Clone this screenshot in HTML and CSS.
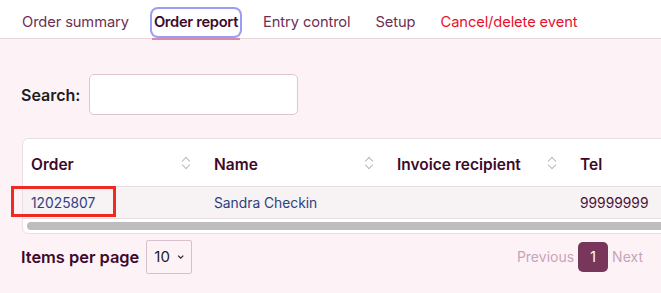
FILE: index.html
```html
<!DOCTYPE html>
<html lang="en">
<head>
  <meta charset="UTF-8" />
  <title>Order report</title>
  <link rel="stylesheet" href="styles.css">
</head>
<body>
  <nav class="tabs">
    <a class="tab">Order summary</a>
    <a class="tab active">Order report</a>
    <a class="tab">Entry control</a>
    <a class="tab">Setup</a>
    <a class="tab danger">Cancel/delete event</a>
  </nav>

  <main class="page">
    <div class="search">
      <label for="search">Search:</label>
      <input type="text" id="search">
    </div>

    <div class="card">
      <table class="orders">
        <thead>
          <tr>
            <th>Order <span class="sort"></span></th>
            <th>Name <span class="sort"></span></th>
            <th>Invoice recipient <span class="sort"></span></th>
            <th>Tel <span class="sort"></span></th>
          </tr>
        </thead>
        <tbody>
          <tr>
            <td class="order-cell"><a class="link">12025807</a><span class="highlight"></span></td>
            <td><a class="link">Sandra Checkin</a></td>
            <td></td>
            <td>99999999</td>
          </tr>
        </tbody>
      </table>
      <div class="scrollbar"><div class="thumb"></div></div>
    </div>

    <div class="footer">
      <div class="per-page">
        <span>Items per page</span>
        <div class="select">10 <svg width="10" height="6" viewBox="0 0 10 6"><path d="M1.5 1.2 5 4.6 8.5 1.2" fill="none" stroke="#222" stroke-width="1.6"/></svg></div>
      </div>
      <div class="pager">
        <span class="muted">Previous</span>
        <span class="current">1</span>
        <span class="muted">Next</span>
      </div>
    </div>
  </main>
</body>
</html>
```

FILE: styles.css
```css
* { box-sizing: border-box; }

body {
  margin: 0;
  font-family: Inter, 'Noto Sans', sans-serif;
  background: #fdf3f7;
  color: #3d0a2a;
  width: 661px;
  height: 293px;
  overflow: hidden;
}

.tabs {
  display: flex;
  align-items: center;
  gap: 21px;
  height: 39px;
  padding: 6px 0 0 20px;
  background: #ffffff;
  border-bottom: 1px solid #e6d6dd;
}

.tab {
  position: relative;
  font-size: 14.7px;
  line-height: 19px;
  color: #6e2f52;
  padding: 4px 2px;
  letter-spacing: -0.1px;
}

.tab.active {
  font-weight: 600;
  color: #3d0a2a;
  letter-spacing: -0.3px;
  border-radius: 6px;
  box-shadow: 0 0 0 2px #9c9cf7;
}

.tab.active::after {
  content: '';
  position: absolute;
  left: 0;
  right: 0;
  bottom: -4px;
  height: 2px;
  background: #d88aa8;
}

.tab.danger { color: #e8112d; }

.page {
  padding: 35px 0 0 21px;
}

.search {
  display: flex;
  align-items: center;
  gap: 9px;
}

.search label {
  font-size: 16px;
  font-weight: 600;
  color: #1d1d1d;
}

.search input {
  width: 209px;
  height: 41px;
  border: 1px solid #dcc7d1;
  border-radius: 5px;
  background: #fff;
}

.card {
  margin-top: 23px;
  margin-left: 1px;
  width: 734px;
  background: #fff;
  border: 1px solid #eadfe4;
  border-radius: 6px;
}

.orders {
  border-collapse: collapse;
  table-layout: fixed;
  width: 732px;
}

.orders th, .orders td {
  width: 183px;
  text-align: left;
  padding: 0 8px;
}

.orders th {
  position: relative;
  height: 47px;
  padding-top: 4px;
  font-size: 15.5px;
  font-weight: 600;
  color: #3d0a2a;
}

.orders td {
  height: 32px;
  padding-top: 1px;
  font-size: 13.8px;
  color: #4a1233;
  background: #f7f2f4;
  border-top: 1px solid #e6dde1;
  border-bottom: 1px solid #e6dde1;
}

.sort {
  position: absolute;
  right: 16px;
  top: 18px;
  width: 8px;
  height: 12px;
}

.sort::before, .sort::after {
  content: '';
  position: absolute;
  left: 1px;
  width: 5px;
  height: 5px;
  border-left: 1.5px solid #bdb7bb;
  border-top: 1.5px solid #bdb7bb;
}

.sort::before { top: 1px; transform: rotate(45deg); }
.sort::after { bottom: 1px; transform: rotate(225deg); }

.link { color: #2f407e; }

.order-cell { position: relative; }

.highlight {
  position: absolute;
  left: -12px;
  top: -1px;
  width: 105px;
  height: 31px;
  border: 3px solid #f02a22;
}

.scrollbar {
  height: 14px;
  padding: 3px 0 3px 4px;
}

.thumb {
  height: 8px;
  background: #bdbdbd;
  border-radius: 4px;
}

.footer {
  display: flex;
  justify-content: space-between;
  align-items: center;
  margin-top: 6px;
  padding-right: 18px;
}

.per-page {
  display: flex;
  align-items: center;
  gap: 7px;
  font-size: 16.4px;
  font-weight: 600;
  color: #3d0a2a;
}

.select {
  display: flex;
  align-items: center;
  gap: 7px;
  width: 46px;
  height: 34px;
  padding: 0 7px;
  border: 1px solid #d8c1cc;
  border-radius: 2px;
  font-size: 15px;
  font-weight: 400;
  color: #1d1d1d;
}

.pager {
  display: flex;
  align-items: center;
  gap: 4px;
  font-size: 14px;
}

.muted { color: #c9a3b8; }

.current {
  width: 30px;
  height: 30px;
  display: flex;
  align-items: center;
  justify-content: center;
  border-radius: 5px;
  background: #77365a;
  color: #fff;
}
```
